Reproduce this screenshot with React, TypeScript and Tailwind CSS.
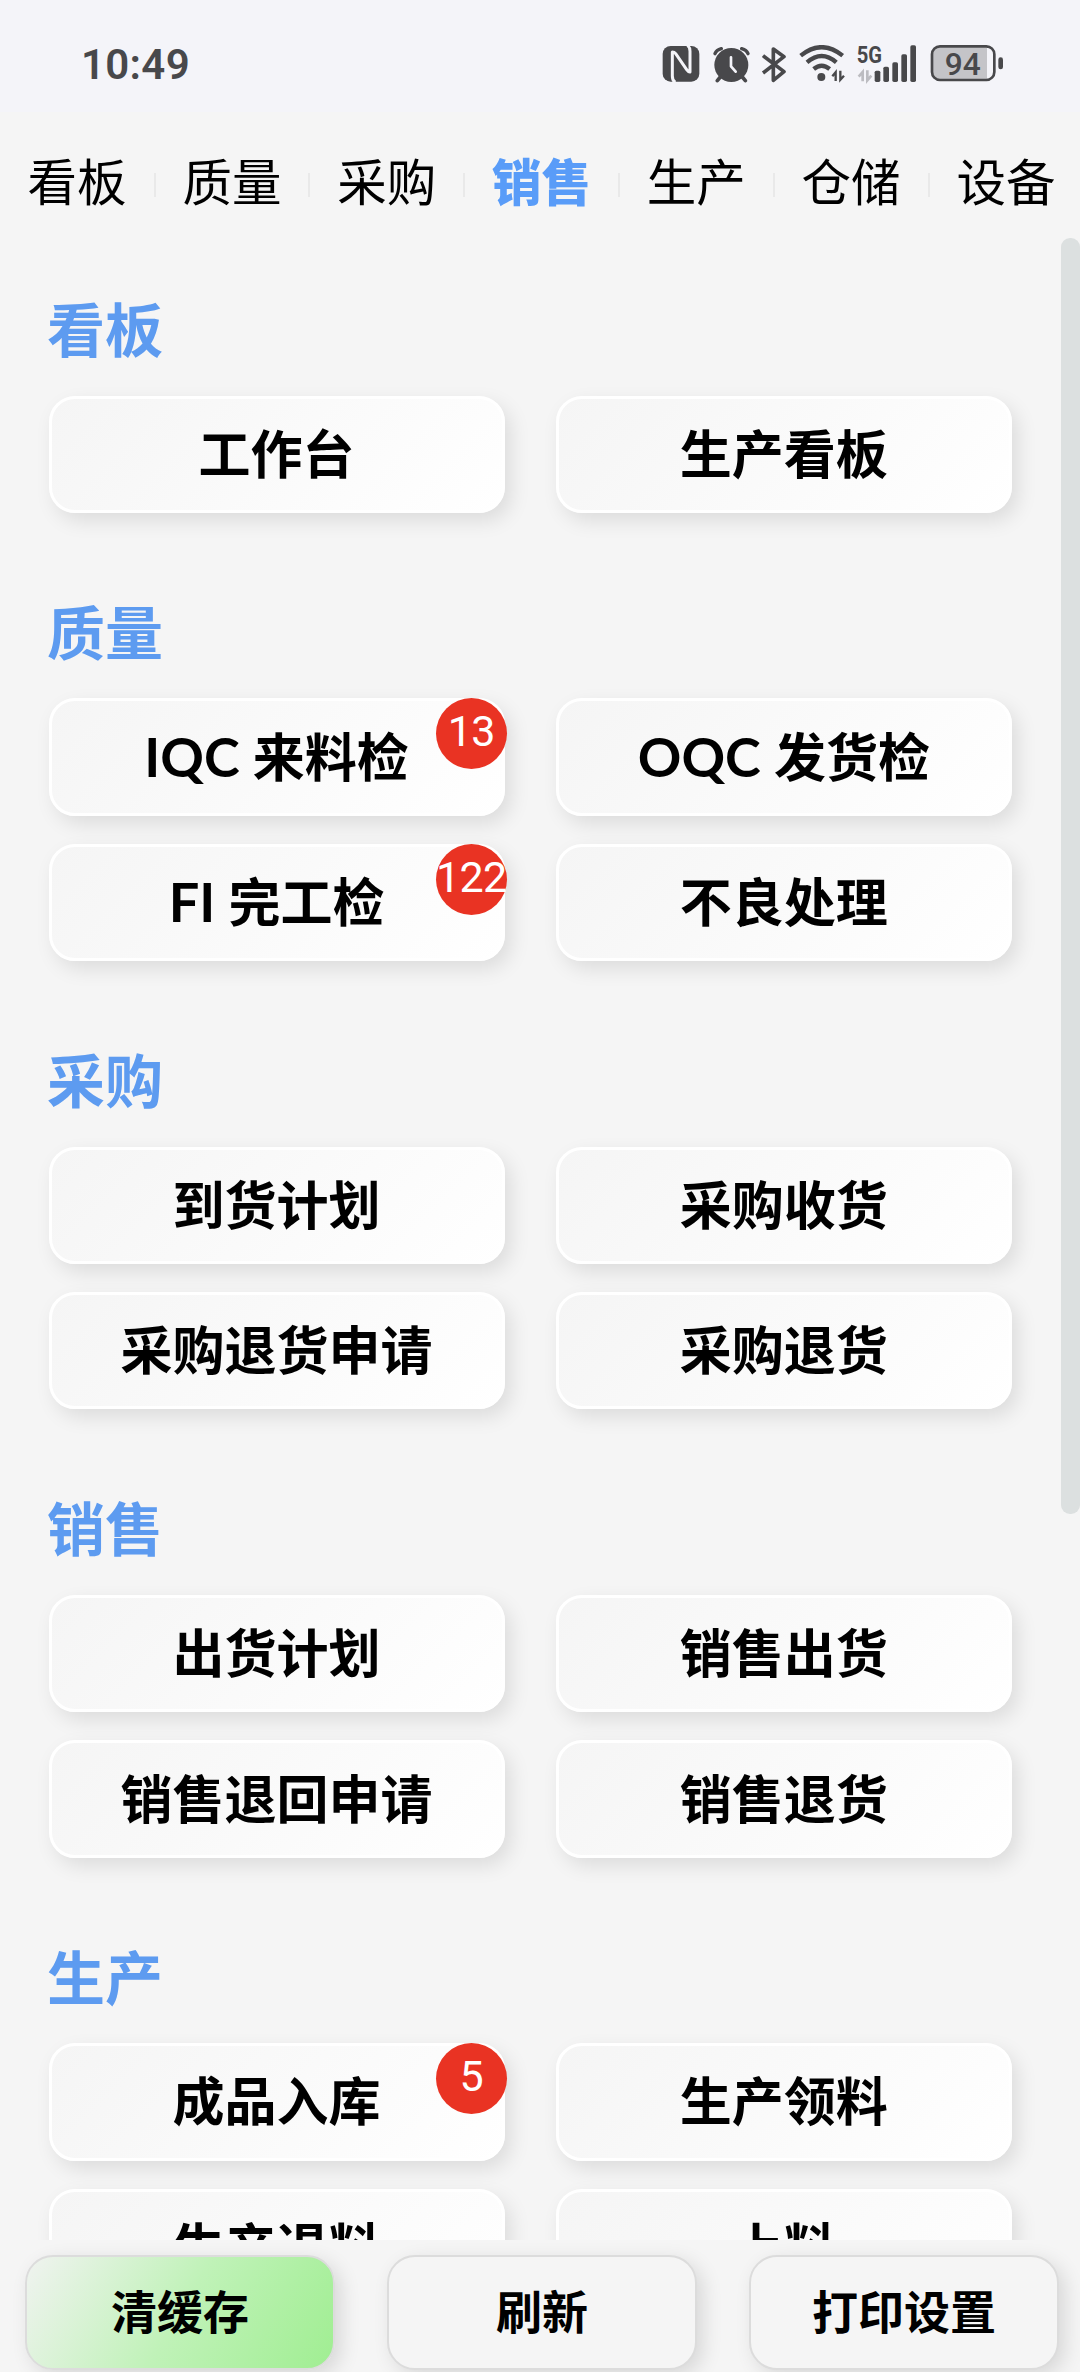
import { useState } from "react";
import clsx from "clsx";

interface TMenuItem {
  code?: string;
  label: string;
  count?: number;
}

interface TSection {
  title: string;
  items: TMenuItem[];
}

const tabs = ["看板", "质量", "采购", "销售", "生产", "仓储", "设备"];

const sections: TSection[] = [
  { title: "看板", items: [{ label: "工作台" }, { label: "生产看板" }] },
  {
    title: "质量",
    items: [
      { code: "IQC", label: "来料检", count: 13 },
      { code: "OQC", label: "发货检" },
      { code: "FI", label: "完工检", count: 122 },
      { label: "不良处理" },
    ],
  },
  {
    title: "采购",
    items: [
      { label: "到货计划" },
      { label: "采购收货" },
      { label: "采购退货申请" },
      { label: "采购退货" },
    ],
  },
  {
    title: "销售",
    items: [
      { label: "出货计划" },
      { label: "销售出货" },
      { label: "销售退回申请" },
      { label: "销售退货" },
    ],
  },
  {
    title: "生产",
    items: [
      { label: "成品入库", count: 5 },
      { label: "生产领料" },
      { label: "生产退料" },
      { label: "上料" },
    ],
  },
];

const StatusBar = () => {
  return (
    <div className="flex h-[112px] shrink-0 items-start justify-between bg-[#f4f4f9] pt-[45px] pr-[76px] pl-[81px] text-[#48484b]">
      <span className="font-['Roboto'] text-[42px] leading-[39px] font-semibold tracking-[0.3px]">
        10:49
      </span>
      <div className="flex">
        {/* nfc */}
        <svg className="h-[38px] w-[38px]" viewBox="64 75 114 114">
          <rect x="66" y="78" width="110" height="107" rx="24" fill="currentColor" />
          <path
            fill="none"
            stroke="#f4f4f9"
            strokeWidth="9"
            strokeLinejoin="round"
            d="M104 187q-9-5-9-19V96q6 0 10 5l33 48q4 6 10 7V94q0-13-8-18"
          />
        </svg>
        {/* alarm */}
        <svg className="ml-[12px] h-[38px] w-[38px]" viewBox="214 75 114 114">
          <g fill="none" stroke="currentColor" strokeLinecap="round">
            <path strokeWidth="10" d="M223 101q4-11 19-15M322 101q-4-11-19-15" />
            <path strokeWidth="11" d="M239 171l-9 11M305 171l9 11" />
          </g>
          <circle cx="272" cy="135" r="51" fill="currentColor" />
          <path
            fill="none"
            stroke="#f4f4f9"
            strokeWidth="8"
            strokeLinecap="round"
            strokeLinejoin="round"
            d="M271 112v27l14 16"
          />
        </svg>
        {/* bluetooth */}
        <svg className="ml-[11px] h-[38px] w-[26px]" viewBox="363 75 78 114">
          <path
            fill="none"
            stroke="currentColor"
            strokeWidth="11"
            strokeLinejoin="round"
            d="M369 107l63 48-32 26V87l32 23-63 49"
          />
        </svg>
        {/* wifi */}
        <svg className="ml-[12px] h-[38px] w-[47px]" viewBox="477 75 141 114">
          <g fill="none" stroke="currentColor" strokeWidth="13">
            <path d="M482 107q63-51 126 0" />
            <path d="M501 127q44-38 88 0" />
            <path d="M521 147q24-20 48 0" />
          </g>
          <circle cx="544" cy="171" r="12" fill="currentColor" />
          <path
            fill="none"
            stroke="currentColor"
            strokeWidth="7"
            d="M577 169l10-12v26M612 167l-11 12v-27"
          />
        </svg>
        {/* mobile signal */}
        <svg
          className="ml-[11px] h-[38px] w-[60px] overflow-visible"
          viewBox="647 75 180 114"
        >
          <text
            x="646"
            y="129"
            fontFamily="Roboto"
            fontSize="70"
            fontWeight="700"
            fill="currentColor"
            textLength="76"
            lengthAdjust="spacingAndGlyphs"
          >
            5G
          </text>
          <path
            fill="none"
            stroke="#bcbcc1"
            strokeWidth="8"
            d="M652 170l12-14v28M690 167l-12 14v-30"
          />
          <g fill="currentColor">
            <rect x="700" y="152" width="17" height="34" rx="5" />
            <rect x="726" y="140" width="17" height="46" rx="5" />
            <rect x="753" y="127" width="17" height="59" rx="5" />
            <rect x="780" y="103" width="17" height="83" rx="5" />
            <rect x="807" y="76" width="17" height="110" rx="5" />
          </g>
        </svg>
        {/* battery */}
        <svg className="ml-[13px] h-[38px] w-[74px]" viewBox="866 75 222 114">
          <path
            fill="#c4c4c8"
            d="M892 82h145v95h-145q-17 0-17-17v-61q0-17 17-17z"
          />
          <rect
            x="872"
            y="79"
            width="187"
            height="101"
            rx="24"
            fill="none"
            stroke="currentColor"
            strokeWidth="8"
          />
          <rect x="1071" y="112" width="14" height="36" rx="7" fill="currentColor" />
          <text
            x="964"
            y="165"
            textAnchor="middle"
            fontFamily="Roboto"
            fontSize="95"
            fontWeight="500"
            fill="currentColor"
          >
            94
          </text>
        </svg>
      </div>
    </div>
  );
};

const MenuButton = ({ code, label, count }: TMenuItem) => {
  return (
    <button className="relative h-[117.4px] rounded-[26px] border-[3px] border-white bg-linear-[135deg] from-[#f5f5f5] to-white pb-px text-[52px] leading-none font-bold text-black shadow-[6px_8px_20px_rgba(0,0,0,0.1)]">
      {code && <span className="text-[54px] leading-[52px]">{code} </span>}
      {label}
      {count !== undefined && (
        <span className="absolute -top-[3px] -right-[5px] flex h-[71px] w-[71px] items-center justify-center rounded-full bg-[#e93323] pb-[4px] font-['Roboto'] text-[43px] font-normal tracking-[-0.7px] whitespace-nowrap text-white">
          {count}
        </span>
      )}
    </button>
  );
};

const App = () => {
  const [activeTab, setActiveTab] = useState("销售");

  return (
    <div className="flex h-[2372px] w-[1080px] flex-col overflow-hidden bg-[#f5f5f5] font-['Lato','Noto_Sans_CJK_SC',sans-serif]">
      <StatusBar />

      <nav className="flex h-[126px] shrink-0 justify-center pt-[31px] pl-[3px]">
        {tabs.map((tab, index) => (
          <div key={tab} className="flex h-[80px] items-center">
            {index > 0 && <span className="mt-[4px] h-[24px] w-[2px] bg-[#e9e9e9]" />}
            <button
              onClick={() => setActiveTab(tab)}
              className={clsx(
                "w-[152.8px] text-center text-[49.5px] leading-none whitespace-nowrap",
                activeTab === tab ? "font-black text-[#599cf8]" : "text-black"
              )}
            >
              {tab}
            </button>
          </div>
        ))}
      </nav>

      <main className="relative h-[2002px] shrink-0 overflow-hidden pr-[68px] pl-[48.5px]">
        {sections.map(({ title, items }) => (
          <section key={title} className="pt-[64px] pb-[28px]">
            <h2 className="-ml-[1.5px] h-[93.5px] text-[58px] leading-[56px] font-bold text-[#5d9bf0]">
              {title}
            </h2>
            <div className="grid grid-cols-2 gap-x-[51px] gap-y-[28px]">
              {items.map((item) => (
                <MenuButton key={item.label} {...item} />
              ))}
            </div>
          </section>
        ))}
        <div className="absolute top-0 right-0 h-[1276px] w-[19px] rounded-[9px] bg-[#dce0e0]" />
      </main>

      <footer className="flex h-[132px] shrink-0 gap-[52px] bg-[#f5f5f5] px-[25px] pt-[15px] text-[46px] leading-none font-bold">
        <button className="h-[115px] w-[310px] shrink-0 rounded-[28px] border-2 border-[#dcdcdc] bg-linear-[120deg] from-[#f0f3f0] via-[#c0f2b8] to-[#a0ee92] pb-[2px] shadow-[6px_6px_20px_rgba(0,0,0,0.12)]">
          清缓存
        </button>
        <button className="h-[115px] w-[310px] shrink-0 rounded-[28px] border-2 border-[#dcdcdc] bg-[#f5f5f5] pb-[2px] shadow-[6px_6px_20px_rgba(0,0,0,0.12)]">
          刷新
        </button>
        <button className="h-[115px] w-[310px] shrink-0 rounded-[28px] border-2 border-[#dcdcdc] bg-[#f5f5f5] pb-[2px] shadow-[6px_6px_20px_rgba(0,0,0,0.12)]">
          打印设置
        </button>
      </footer>
    </div>
  );
};

export default App;
